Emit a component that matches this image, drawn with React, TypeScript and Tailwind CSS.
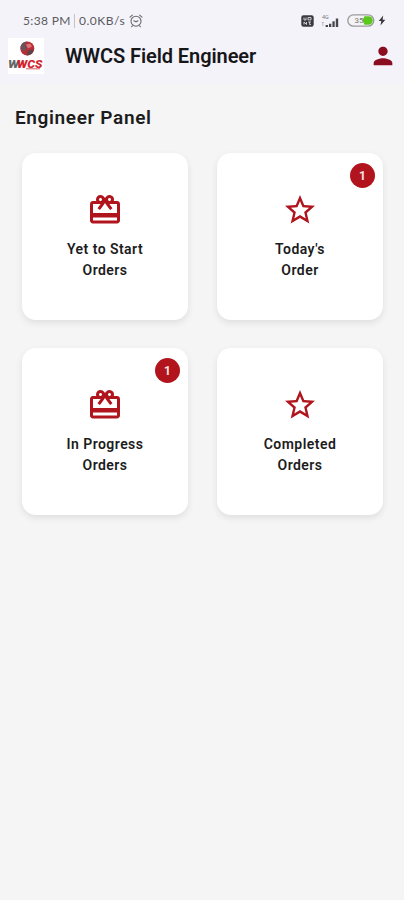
import React from 'react';
import { MdCardGiftcard, MdPerson, MdStarBorder } from 'react-icons/md';

interface OrderCardProps {
  icon: React.ReactNode;
  lines: [string, string];
  count?: number;
}

const OrderCard = ({ icon, lines, count }: OrderCardProps) => {
  return (
    <button className="relative flex h-[167px] w-[166px] flex-col items-center rounded-[14px] bg-white pt-[39px] shadow-[0_3px_7px_rgba(0,0,0,0.09)]">
      <span className="text-[#b0141c]">{icon}</span>
      <span className="mt-[11px] text-center text-[14px] leading-[21px] font-semibold tracking-[0.45px] text-[#1c1c1c]">
        {lines[0]}
        <br />
        {lines[1]}
      </span>
      {count !== undefined && (
        <span className="absolute top-[10px] right-[8px] flex h-[25px] w-[25px] items-center justify-center rounded-full bg-[#b2141e] text-[12px] font-bold text-[#f6e4e5]">
          {count}
        </span>
      )}
    </button>
  );
};

const AlarmIcon = () => (
  <svg className="ml-[3px] h-[14px] w-[14px]" viewBox="0 0 14 14" fill="none" stroke="#6a6a6e" strokeWidth="1.1" strokeLinecap="round">
    <circle cx="7" cy="7.2" r="5" />
    <path d="M1 3.2 3.4 1.2M13 3.2 10.6 1.2M4.8 6.8 7 7.8 9 6.8M3.4 11.8l-.8.8M10.6 11.8l.8.8" />
  </svg>
);

const VolteIcon = () => (
  <svg className="h-[12px] w-[13px]" viewBox="0 0 13 12">
    <rect x="0.3" y="0.3" width="12.4" height="11.4" rx="2.2" fill="#3a3a3e" />
    <path d="M3 2.5v2.5h2V2.5M7 2.5h3v2.4H7zM3 9.5V7l2.5 2.5V7M7.3 7H10M8.6 7v2.6H10" fill="none" stroke="#dcdce2" strokeWidth="0.9" />
  </svg>
);

const SignalIcon = () => (
  <svg className="ml-[7px] h-[14px] w-[19px]" viewBox="0 0 19 14">
    <text x="1" y="5" fontSize="5.5" fill="#77777b">4G</text>
    <path d="M.8 8.5h2M1.8 8v4" stroke="#b4b4b9" strokeWidth="0.9" />
    <path d="M4.6 11h2.4v2H4.6zM8 9.8h2.3V13H8zM11.4 7.2h2.3V13h-2.3zM14.8 4.5h2.4V13h-2.4z" fill="#48484c" />
  </svg>
);

const BatteryIcon = () => (
  <svg className="ml-[7px] h-[13px] w-[28px]" viewBox="0 0 28 13">
    <rect x="0.8" y="0.8" width="26" height="11.4" rx="5.7" fill="#f4f4f6" stroke="#9b9b9f" strokeWidth="1.3" />
    <path d="M15.5 6.5 17.5 2.2h4a4.3 4.3 0 0 1 0 8.6h-4z" fill="#5bc91c" />
    <text x="7.5" y="9.4" fontSize="8" fill="#77777b">35</text>
  </svg>
);

const Logo = () => (
  <svg className="h-[36px] w-[36px] bg-white" viewBox="0 0 36 36">
    <circle cx="19.3" cy="10.5" r="7" fill="#b92c35" />
    <path d="M12.6 8.5a7 7 0 0 1 6.4-5l-2 4 2 2-3 4-3-2z" fill="#66545a" />
    <path d="M20 12.5l5.7-1a7 7 0 0 1-7 6z" fill="#55464c" />
    <path d="M18 6.5l4-1 2 3-4 2z" fill="#df7478" />
    <g fontFamily="Roboto, sans-serif" fontSize="11.5" fontWeight="900" fontStyle="italic">
      <text x="0" y="30" textLength="11" lengthAdjust="spacingAndGlyphs" fill="#66666a">W</text>
      <text x="9" y="30" textLength="25.5" lengthAdjust="spacingAndGlyphs" fill="#d3202b">WCS</text>
    </g>
    <path d="M18 30.8h14" stroke="#cf5057" strokeWidth="0.9" />
  </svg>
);

const StatusBar = () => (
  <div className="flex h-[38px] items-center pt-[3px] pr-[18px] pl-[23px]">
    <div className="flex items-center text-[12px] text-[#5a5a5e]">
      <span className="w-[48px] font-['Lato',sans-serif] tracking-[0.35px] whitespace-nowrap">5:38 PM</span>
      <span className="ml-[3px] h-[14px] w-px bg-[#c2c2c7]" />
      <span className="ml-[4px] w-[47px] font-['Lato',sans-serif] tracking-[0.5px] whitespace-nowrap">0.0KB/s</span>
      <AlarmIcon />
    </div>
    <div className="ml-auto flex items-center">
      <VolteIcon />
      <SignalIcon />
      <BatteryIcon />
      <svg className="ml-[3px] h-[11px] w-[8px]" viewBox="0 0 8 11">
        <path d="M5.2 0.5.7 6h2.6l-.8 4.5L7.3 4.7H4.6z" fill="#38383c" />
      </svg>
    </div>
  </div>
);

export default function App() {
  return (
    <div className="min-h-[900px] w-[404px] bg-[#f5f5f5] font-['Roboto',sans-serif]">
      <header className="h-[84px] bg-[#f4f3fa]">
        <StatusBar />
        <div className="flex h-[36px] items-center pr-[7px] pl-[8px]">
          <Logo />
          <h1 className="ml-[21px] text-[20px] leading-[36px] font-semibold tracking-[-0.08px] whitespace-nowrap text-[#17171a]">
            WWCS Field Engineer
          </h1>
          <MdPerson className="ml-auto text-[#8a0d20]" size={28} />
        </div>
      </header>
      <main>
        <h2 className="pt-[20px] pl-[15px] text-[19px] leading-[28px] font-semibold tracking-[0.63px] text-[#1c1c1c]">
          Engineer Panel
        </h2>
        <div className="mt-[21px] grid w-fit grid-cols-2 gap-x-[29px] gap-y-[28px] pl-[22px]">
          <OrderCard icon={<MdCardGiftcard size={36} />} lines={['Yet to Start', 'Orders']} />
          <OrderCard icon={<MdStarBorder size={36} />} lines={["Today's", 'Order']} count={1} />
          <OrderCard icon={<MdCardGiftcard size={36} />} lines={['In Progress', 'Orders']} count={1} />
          <OrderCard icon={<MdStarBorder size={36} />} lines={['Completed', 'Orders']} />
        </div>
      </main>
    </div>
  );
}
